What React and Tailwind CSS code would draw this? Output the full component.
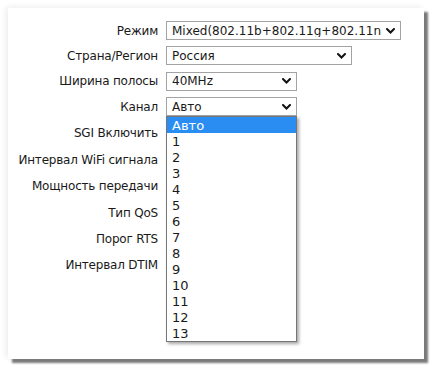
import React from 'react'

const font = { fontFamily: '"DejaVu Sans", Verdana, sans-serif' }

const Chevron = () => (
  <svg width="9" height="6" viewBox="0 0 9 6" className="shrink-0">
    <path d="M1 1 L4.5 4.5 L8 1" fill="none" stroke="#111" strokeWidth="2" strokeLinecap="round" />
  </svg>
)

const FakeSelect = ({ value, width }) => (
  <div className={`flex h-[19px] items-center justify-between border border-[#a3a3a3] bg-white pl-[5px] pr-[5px] ${width}`}>
    <span className="truncate leading-none">{value}</span>
    <Chevron />
  </div>
)

// row heights vary slightly, as in the original form
const rows = [
  { label: 'Режим', h: 'h-[25px]', control: <FakeSelect value="Mixed(802.11b+802.11g+802.11n" width="w-[235px]" /> },
  { label: 'Страна/Регион', h: 'h-[25px]', control: <FakeSelect value="Россия" width="w-[186px]" /> },
  { label: 'Ширина полосы', h: 'h-[26px]', control: <FakeSelect value="40MHz" width="w-[131px]" /> },
  { label: 'Канал', h: 'h-[25px]', control: <FakeSelect value="Авто" width="w-[131px]" />, open: true },
  { label: 'SGI Включить', h: 'h-[27px]' },
  { label: 'Интервал WiFi сигнала', h: 'h-[27px]' },
  { label: 'Мощность передачи', h: 'h-[26px]' },
  { label: 'Тип QoS', h: 'h-[27px]' },
  { label: 'Порог RTS', h: 'h-[26px]' },
  { label: 'Интервал DTIM', h: 'h-[26px]' },
]

const channels = ['Авто', '1', '2', '3', '4', '5', '6', '7', '8', '9', '10', '11', '12', '13']

export default function App() {
  return (
    <div className="h-[372px] w-[436px] bg-white pl-[8px] pt-[8px] text-[12px] text-[#1a1a1a]" style={font}>
      <div className="h-[351px] w-[416px] bg-white pt-[10px] shadow-[4px_4px_2px_#7a7a7a,-2px_-1px_6px_rgba(0,0,0,0.08)]">
        {rows.map((r) => (
          <div key={r.label} className={`flex items-center ${r.h}`}>
            <div className="w-[150px] text-right tracking-[-0.2px]">{r.label}</div>
            <div className="relative ml-[8px]">
              {r.control}
              {r.open && (
                <div className="absolute left-0 top-[19px] z-10 w-[131px] border border-[#767676] bg-white shadow-[2px_2px_3px_rgba(0,0,0,0.35)]">
                  {channels.map((c, i) => (
                    <div
                      key={c}
                      className={`flex h-[16px] items-center pl-[5px] text-[13px] leading-none ${i === 0 ? 'bg-[#2a8df2] text-white' : ''}`}
                    >
                      {c}
                    </div>
                  ))}
                </div>
              )}
            </div>
          </div>
        ))}
      </div>
    </div>
  )
}
